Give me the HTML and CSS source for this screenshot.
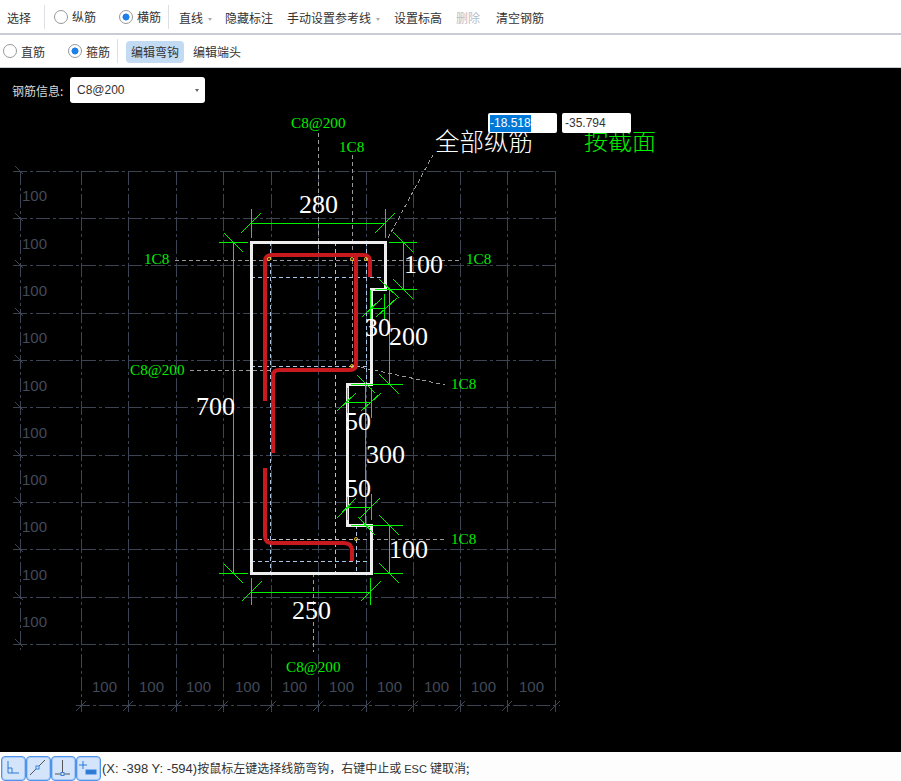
FILE: index.html
```html
<!DOCTYPE html>
<html lang="zh-CN">
  <head>
    <meta charset="UTF-8" />
    <title>钢筋编辑</title>
    <link rel="stylesheet" href="styles.css">
  </head>
  <body>
    <div class="page">
      <div class="toolbar">
        <span class="tool first">选择</span>
        <i class="sep"></i>
        <label class="radio-item"><i class="radio"></i>纵筋</label>
        <label class="radio-item second"><i class="radio on"></i>横筋</label>
        <i class="sep close"></i>
        <span class="tool drop">直线<i class="caret"></i></span>
        <span class="tool">隐藏标注</span>
        <span class="tool">手动设置参考线<i class="caret"></i></span>
        <span class="tool wide">设置标高</span>
        <span class="tool disabled">删除</span>
        <span class="tool last">清空钢筋</span>
      </div>
      <div class="toolbar lower">
        <label class="radio-item nomargin"><i class="radio"></i>直筋</label>
        <label class="radio-item second"><i class="radio on"></i>箍筋</label>
        <i class="sep close"></i>
        <span class="tool active">编辑弯钩</span>
        <span class="tool after-active">编辑端头</span>
      </div>

      <div class="canvas">
        <svg class="drawing" viewBox="0 68 901 684" width="901" height="684">
          <!-- grid -->
          <path class="grid" d="M13 171H555M13 218H555M13 265H555M13 313H555M13 360H555M13 407H555M13 455H555M13 502H555M13 549H555M13 597H555M13 644H555" />
          <path class="grid" d="M20 171V650M81 171V712M128 171V712M176 171V712M223 171V712M271 171V712M318 171V712M366 171V712M413 171V712M460 171V712M507 171V712M555 171V712" />
          <path class="grid" d="M76 705H560" />
          <path class="grid-tick" d="M15 166L23 174M15 213L23 221M15 260L23 268M15 308L23 316M15 355L23 363M15 402L23 410M15 450L23 458M15 497L23 505M15 544L23 552M15 592L23 600M15 639L23 647M76 711L86 701M123 711L133 701M171 711L181 701M218 711L228 701M266 711L276 701M313 711L323 701M361 711L371 701M408 711L418 701M455 711L465 701M502 711L512 701M550 711L560 701" />
          <g class="grid-text">
            <text x="22" y="201">100</text>
            <text x="22" y="249">100</text>
            <text x="22" y="296">100</text>
            <text x="22" y="343">100</text>
            <text x="22" y="391">100</text>
            <text x="22" y="438">100</text>
            <text x="22" y="485">100</text>
            <text x="22" y="532">100</text>
            <text x="22" y="580">100</text>
            <text x="22" y="627">100</text>
            <text x="92" y="692">100</text>
            <text x="139" y="692">100</text>
            <text x="186" y="692">100</text>
            <text x="235" y="692">100</text>
            <text x="282" y="692">100</text>
            <text x="329" y="692">100</text>
            <text x="377" y="692">100</text>
            <text x="424" y="692">100</text>
            <text x="471" y="692">100</text>
            <text x="519" y="692">100</text>
          </g>

          <!-- leaders -->
          <path class="leader" d="M175 260H462M190 370H352M354 366L445 385M356 539H447M318 133V255M352 155V366M313 573V652M388 238L434 153" />
          <path class="guide" d="M270 242V573M335 242V573M366 242V384M356 525V573M251 277H385M251 366H370M251 561H370" />
          <path class="guide-soft" d="M251 539H356" />

          <!-- section outline -->
          <path class="outline" d="M251 242H385V289H371V384H347V525H371V573H251Z" />

          <!-- rebar -->
          <path class="rebar" d="M265 401V262Q265 255 272 255H363Q370 255 370 262V277" />
          <path class="rebar" d="M356 255V364Q356 370 350 370H279Q273 370 273 376V453" />
          <path class="rebar" d="M265 468V536Q265 543 272 543H344Q352 543 352 551V561" />
          <g class="node">
            <circle cx="269" cy="259" r="1.5" />
            <circle cx="352" cy="259" r="1.5" />
            <circle cx="366" cy="259" r="1.5" />
            <circle cx="352" cy="366" r="1.5" />
            <circle cx="356" cy="539" r="1.5" />
          </g>

          <!-- dimensions -->
          <path class="dim" d="M251 223H385M251 209V238M385 209V238M241 233L261 213M375 233L395 213
            M233 242V573M219 242H248M219 573H248M224 233L243 252M224 564L243 583
            M403 242V289M389 242H417M375 289H417M393 232L413 252M393 279L413 299
            M389 289V384M351 384H403M379 279L399 298M379 374L399 394
            M370 308H385M370 290V320M384 294V320M362 317L382 298M376 317L397 298
            M347 402H371M347 388V418M371 388V418M337 411L356 393M361 411L381 393
            M365 384V525M347 507H371M347 494V520M371 494V520M337 518L356 498M360 518L380 498
            M357 375L375 393M358 517L375 535
            M351 525H403M374 573H403M389 525V573M379 515L399 535M379 563L399 583
            M251 592H370M251 578V605M370 578V605M242 601L262 581M361 601L381 581" />

          <g class="dim-text">
            <text x="299" y="213">280</text>
            <text x="404" y="273">100</text>
            <text x="365" y="336">30</text>
            <text x="389" y="345">200</text>
            <text x="196" y="415">700</text>
            <text x="345" y="430">50</text>
            <text x="366" y="463">300</text>
            <text x="345" y="497">50</text>
            <text x="389" y="558">100</text>
            <text x="292" y="619">250</text>
          </g>
          <g class="bar-text">
            <text x="291" y="128">C8@200</text>
            <text x="339" y="152">1C8</text>
            <text x="144" y="264">1C8</text>
            <text x="466" y="264">1C8</text>
            <text x="130" y="375">C8@200</text>
            <text x="451" y="389">1C8</text>
            <text x="451" y="544">1C8</text>
            <text x="286" y="672">C8@200</text>
          </g>
          <text class="title-text" x="435" y="151">全部纵筋</text>
          <text class="title-text green" x="584" y="150">按截面</text>
        </svg>

        <div class="bar-info">
          <span class="bar-label">钢筋信息:</span>
          <div class="select">C8@200<i class="caret dark"></i></div>
        </div>
        <div class="coord first-coord"><span class="selected">-18.518</span></div>
        <div class="coord second-coord">-35.794</div>
      </div>

      <div class="status">
        <button class="snap">
          <svg width="23" height="23" viewBox="0 0 23 23"><path class="blue" d="M6 4V16H17M6 11H10V16" /></svg>
        </button>
        <button class="snap">
          <svg width="23" height="23" viewBox="0 0 23 23"><path d="M3 18L18 3" /><rect x="9" y="9" width="3" height="3" /></svg>
        </button>
        <button class="snap">
          <svg width="23" height="23" viewBox="0 0 23 23"><path d="M10.500 3V17M3 17H18" /><rect x="9" y="15.500" width="3" height="3" /></svg>
        </button>
        <button class="snap">
          <svg width="23" height="23" viewBox="0 0 23 23"><path class="blue" d="M6 4V12M2 8H10" /><rect class="fill" x="9" y="13" width="10" height="4" /></svg>
        </button>
        <span class="message"><span class="latin">(X: -398 Y: -594)</span>按鼠标左键选择线筋弯钩，右键中止或<span class="esc"> ESC </span>键取消;</span>
      </div>
    </div>
  </body>
</html>
```

FILE: styles.css
```css
body {
  font-family: "Noto Sans CJK SC", "Liberation Sans", sans-serif;
  font-size: 12px;
  color: #333;
  background-color: #000;
  margin: 0;
}

.page {
  display: flex;
  flex-direction: column;
  height: 781px;
  overflow: hidden;
}

.toolbar {
  display: flex;
  align-items: center;
  height: 33px;
  flex: none;
  background-color: #fff;
  border-bottom: 2px solid #c8ccd4;
  white-space: nowrap;
}

.toolbar.lower {
  height: 32px;
  border-bottom: 1px solid #c8ccd4;
}

.tool {
  margin-left: 14px;
  margin-top: 2px;
  line-height: 22px;
}

.tool.first {
  margin-left: 7px;
}

.tool.wide {
  margin-left: 14px;
}

.tool.disabled {
  color: #b9bdc9;
  margin-left: 14px;
}

.tool.last {
  margin-left: 16px;
}

.tool.drop {
  margin-left: 0;
  width: 34px;
  padding-left: 2px;
  box-sizing: border-box;
}

.tool.active {
  margin-left: 0;
  padding: 0 5px;
  background-color: #c3daf3;
  border-radius: 4px;
}

.tool.after-active {
  margin-left: 9px;
}

.sep {
  width: 1px;
  height: 24px;
  margin-left: 13px;
  background-color: #dcdfe4;
}

.sep.close {
  margin-left: 7px;
  margin-right: 8px;
}

.radio-item {
  display: flex;
  align-items: center;
  margin-left: 9px;
}

.radio-item.second {
  margin-left: 23px;
}

.radio-item.nomargin {
  margin-left: 3px;
}

.radio {
  width: 14px;
  height: 14px;
  margin-right: 4px;
  border: 1px solid #999;
  border-radius: 50%;
  box-sizing: border-box;
  background-color: #fff;
}

.radio.on {
  background: radial-gradient(circle, #1e7fe8 0, #1e7fe8 3.2px, #fff 3.8px);
}

.caret {
  display: inline-block;
  width: 0;
  height: 0;
  margin-left: 5px;
  vertical-align: middle;
  border-top: 3px solid #aaa;
  border-left: 2.5px solid transparent;
  border-right: 2.5px solid transparent;
}

.caret.dark {
  position: absolute;
  right: 6px;
  top: 12px;
  border-top-color: #666;
}

.canvas {
  position: relative;
  flex: 1;
  background-color: #000;
}

.drawing {
  display: block;
}

.drawing path {
  fill: none;
  shape-rendering: crispEdges;
}

.drawing path.rebar {
  shape-rendering: auto;
}

.grid {
  stroke: #3c4454;
  stroke-width: 1;
  stroke-dasharray: 14 3 3 3;
}

.grid-tick {
  stroke: #3c4454;
}

.grid-text text {
  font-family: "Liberation Sans", sans-serif;
  font-size: 15px;
  font-weight: 300;
  fill: #434a59;
}

.leader {
  stroke: #9a9a9a;
  stroke-dasharray: 4 3;
}

.guide {
  stroke: #a9c6e6;
  stroke-dasharray: 4 3;
}

.guide-soft {
  stroke: #c4c4c4;
  stroke-dasharray: 4 3;
}

.outline {
  stroke: #eeeeee;
  stroke-width: 3;
}

.rebar {
  stroke: #c8191f;
  stroke-width: 4;
}

.node circle {
  fill: none;
  stroke: #f0c419;
}

.dim {
  stroke: #00f000;
  stroke-width: 1;
}

.dim-text text {
  font-family: "Liberation Serif", serif;
  font-size: 26px;
  fill: #fff;
}

.bar-text text {
  font-family: "Liberation Serif", serif;
  font-size: 15.2px;
  fill: #00ee00;
}

.title-text {
  font-family: "Noto Sans CJK SC", sans-serif;
  font-size: 24.500px;
  font-weight: 300;
  fill: #fff;
}

.title-text.green {
  font-size: 24px;
  fill: #00ee00;
}

.bar-info {
  position: absolute;
  left: 12px;
  top: 9px;
  display: flex;
  align-items: center;
}

.bar-label {
  width: 58px;
  color: #d8d8d8;
}

.select {
  position: relative;
  width: 135px;
  height: 26px;
  padding-left: 7px;
  box-sizing: border-box;
  line-height: 27px;
  font-family: "Liberation Sans", sans-serif;
  font-size: 12px;
  background-color: #fff;
  border-radius: 3px;
}

.coord {
  position: absolute;
  top: 45px;
  width: 69px;
  height: 20px;
  padding: 0 0 0 2px;
  box-sizing: border-box;
  line-height: 20px;
  font-family: "Liberation Sans", sans-serif;
  font-size: 12px;
  background-color: #fff;
  border-radius: 2px;
}

.first-coord {
  left: 488px;
}

.second-coord {
  left: 562px;
  padding-left: 3px;
}

.selected {
  display: inline-block;
  height: 17px;
  line-height: 17px;
  color: #fff;
  background-color: #0078d7;
}

.status {
  display: flex;
  align-items: center;
  height: 29px;
  flex: none;
  padding-left: 1px;
  box-sizing: border-box;
  background-color: #fdfdfd;
}

.snap {
  display: block;
  width: 25px;
  height: 25px;
  margin-top: 3px;
  padding: 0;
  background-color: #d4e5fb;
  border: 1px solid #4f94ea;
  border-radius: 4px;
  box-shadow: inset 0 0 0 1px rgba(79, 148, 234, 0.35);
}

.snap svg {
  display: block;
  stroke: #555;
  fill: none;
}

.snap svg .blue {
  stroke: #2b7ad6;
}

.snap svg rect {
  stroke: #3b82dc;
  stroke-width: 1;
  fill: #d4e5fb;
}

.snap svg rect.fill {
  fill: #2b7ad6;
}

.message {
  margin-left: 1px;
  margin-top: 2px;
  white-space: pre;
}

.latin {
  font-family: "Liberation Sans", sans-serif;
  font-size: 13px;
}

.esc {
  font-family: "Liberation Sans", sans-serif;
  font-size: 11px;
}
```
